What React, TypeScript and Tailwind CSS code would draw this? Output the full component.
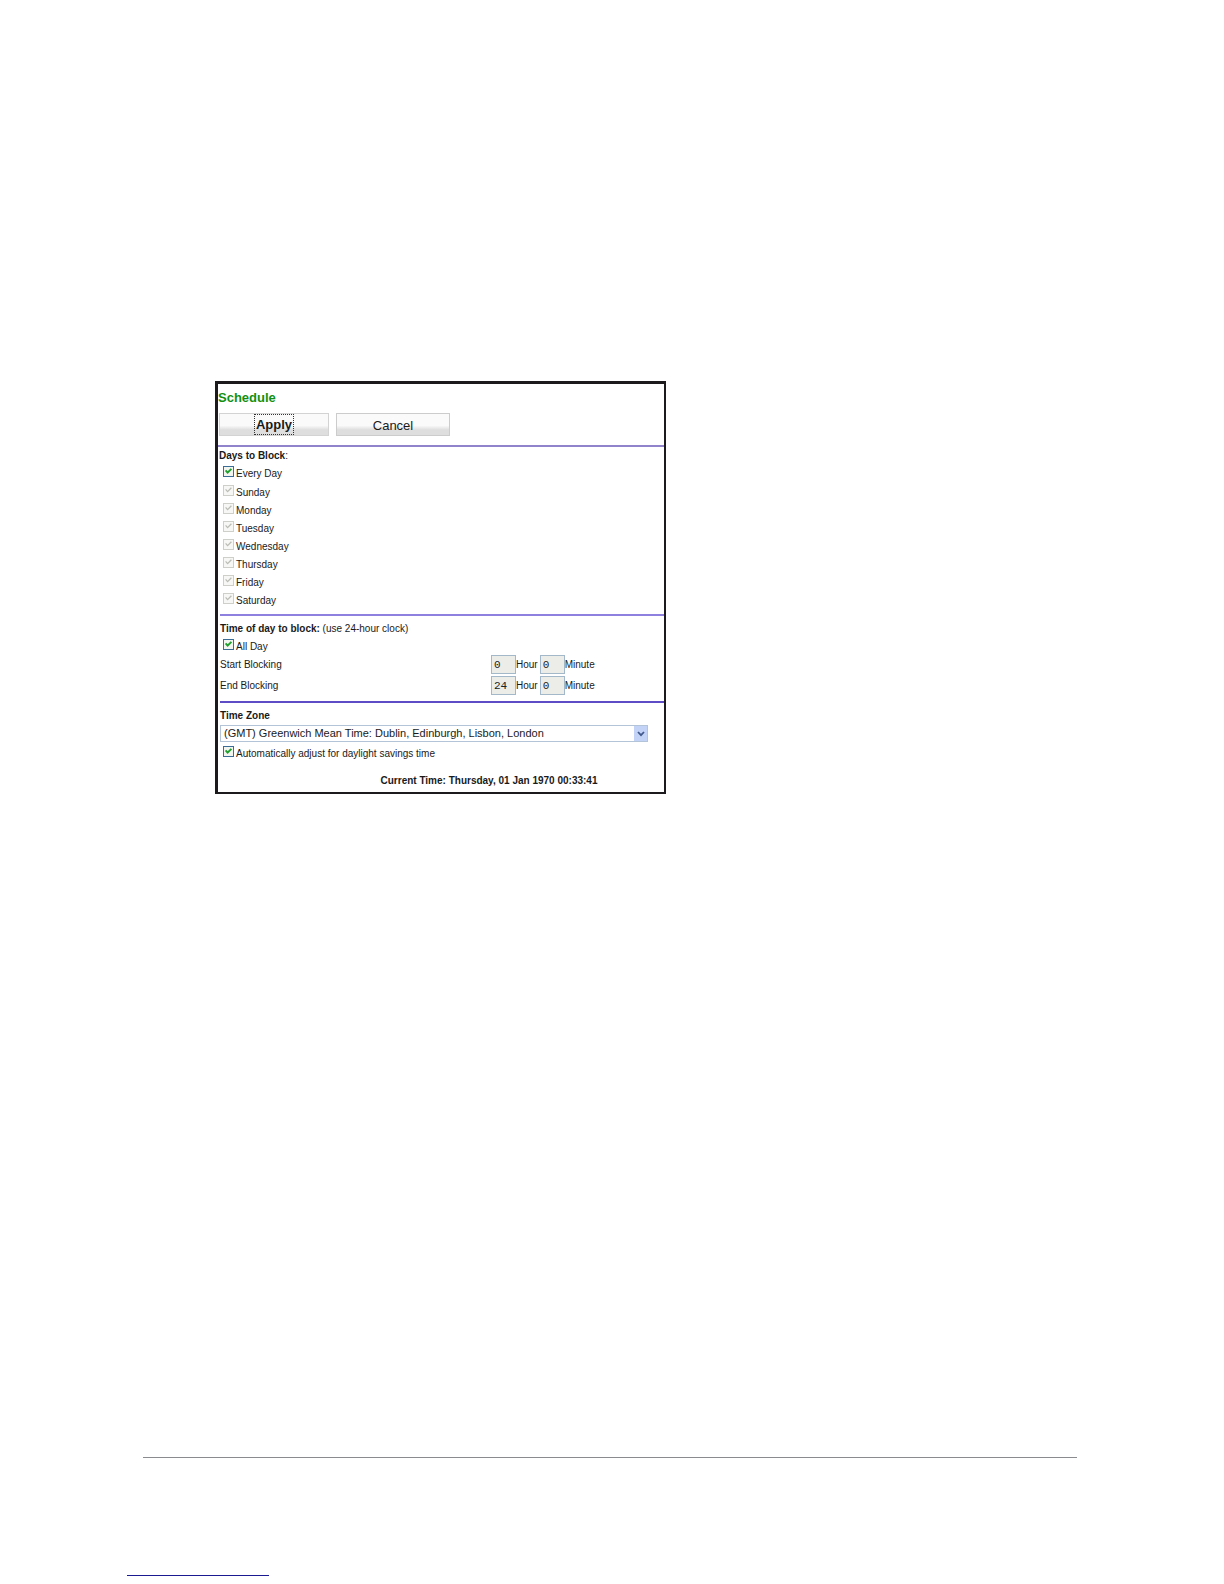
import { useState } from "react";
import type { ReactNode } from "react";

const DAYS = ["Sunday", "Monday", "Tuesday", "Wednesday", "Thursday", "Friday", "Saturday"];

function CheckRow({
  label,
  checked,
  disabled = false,
  onChange,
}: {
  label: string;
  checked: boolean;
  disabled?: boolean;
  onChange?: (value: boolean) => void;
}) {
  return (
    <label className="flex h-[18px] items-start gap-[2px] pl-[5px]">
      <span className="relative mt-px block size-[11px]">
        <input
          type="checkbox"
          checked={checked}
          disabled={disabled}
          onChange={(e) => onChange?.(e.target.checked)}
          className="block size-[11px] appearance-none border border-[#3b6c96] bg-[#f3f5f1] disabled:border-[#cfcfc9] disabled:bg-[#f7f7f5]"
        />
        {checked && (
          <svg viewBox="0 0 11 11" className="pointer-events-none absolute inset-0 size-[11px]" fill="none">
            <path
              d="M2.6 4.4 L4.6 6.6 L8.4 2.8"
              stroke={disabled ? "#bcbcb6" : "#1fa02c"}
              strokeWidth={disabled ? 1.3 : 1.9}
            />
          </svg>
        )}
      </span>
      {label}
    </label>
  );
}

function Section({ children, className = "" }: { children: ReactNode; className?: string }) {
  return <section className={className}>{children}</section>;
}

function NumberBox({ label, value }: { label: string; value: string }) {
  return (
    <label className="flex items-center">
      <input
        type="text"
        defaultValue={value}
        disabled
        className="h-[19px] w-[25px] border border-[#a3b8c8] bg-[#ecede8] px-[2px] font-['Liberation_Mono',monospace] text-[11px] text-[#222222]"
      />
      {label}
    </label>
  );
}

function TimeRow({ label, hour, minute }: { label: string; hour: string; minute: string }) {
  return (
    <div className="grid grid-cols-[271fr_173fr] items-center">
      <span>{label}</span>
      <div className="flex gap-[2px]">
        <NumberBox label="Hour" value={hour} />
        <NumberBox label="Minute" value={minute} />
      </div>
    </div>
  );
}

export default function App() {
  const [everyDay, setEveryDay] = useState(true);
  const [allDay, setAllDay] = useState(true);
  const [dst, setDst] = useState(true);

  return (
    <div className="bg-white font-['Liberation_Sans',Arial,sans-serif] text-[10px] leading-[18px] text-[#1a1a1a]">
      <main className="pt-[381px] pl-[215px]">
        <form
          className="w-full max-w-[451px] border-t-[3px] border-r-2 border-b-2 border-l-[3px] border-[#1c1a1c]"
          onSubmit={(e) => e.preventDefault()}
        >
          <h1 className="pt-1 text-[13px] leading-[20px] font-bold text-[#129012]">Schedule</h1>
          <div className="flex gap-[7px] pt-[5px] pb-[9px] pl-px text-[13px]">
            <button
              type="submit"
              className="flex h-[23px] w-[110px] items-center justify-center border border-[#d3d3d3] bg-linear-to-b from-[#fafafa] from-55% to-[#dedede] to-75% font-bold"
            >
              <span className="border border-dotted border-[#333333] px-px pt-px leading-[18px]">Apply</span>
            </button>
            <button
              type="button"
              className="h-[23px] w-[114px] border border-[#cccccc] bg-linear-to-b from-[#fafafa] from-55% to-[#dedede] to-75% pt-[2px]"
            >
              Cancel
            </button>
          </div>

          <Section className="border-t-2 border-[#9083cb] pb-1">
            <h2 className="pl-px font-bold">
              Days to Block<span className="font-normal">:</span>
            </h2>
            <CheckRow label="Every Day" checked={everyDay} onChange={setEveryDay} />
            <div className="pt-px">
              {DAYS.map((day) => (
                <CheckRow key={day} label={day} checked disabled />
              ))}
            </div>
          </Section>

          <Section className="ml-[2px] border-t-2 border-[#8d80df] pt-1 pb-[6px]">
            <h2 className="leading-[18px]">
              <b>Time of day to block:</b> (use 24-hour clock)
            </h2>
            <div className="-ml-[2px] h-[17px]">
              <CheckRow label="All Day" checked={allDay} onChange={setAllDay} />
            </div>
            <div className="flex flex-col gap-[2px]">
              <TimeRow label="Start Blocking" hour="0" minute="0" />
              <TimeRow label="End Blocking" hour="24" minute="0" />
            </div>
          </Section>

          <Section className="ml-[2px] border-t-2 border-[#5d4cc6] pt-1 pb-[2px]">
            <label htmlFor="zone" className="block font-bold">
              Time Zone
            </label>
            <div className="relative mr-4">
              <select
                id="zone"
                className="block h-[17px] w-full appearance-none border border-[#b3c4d8] bg-white pl-[3px] text-[11px] leading-[15px]"
              >
                <option>(GMT) Greenwich Mean Time: Dublin, Edinburgh, Lisbon, London</option>
              </select>
              <span className="pointer-events-none absolute inset-y-px right-px flex w-[13px] items-center justify-center bg-[#c3d3f8]">
                <svg viewBox="0 0 8 6" className="h-[6px] w-[8px]" fill="none">
                  <path d="M1 1 L4 4.2 L7 1" stroke="#42598c" strokeWidth="1.8" />
                </svg>
              </span>
            </div>
            <div className="-ml-[2px] pt-[3px]">
              <CheckRow label="Automatically adjust for daylight savings time" checked={dst} onChange={setDst} />
            </div>
            <p className="pt-[9px] pl-[94px] text-center font-bold">Current Time: Thursday, 01 Jan 1970 00:33:41</p>
          </Section>
        </form>
      </main>
      <footer className="pt-[663px] pb-2">
        <hr className="mr-[147px] ml-[143px] border-t border-[#8a8b8e]" />
        <hr className="mt-[117px] ml-[127px] w-[142px] border-t border-[#1b1a90]" />
      </footer>
    </div>
  );
}
